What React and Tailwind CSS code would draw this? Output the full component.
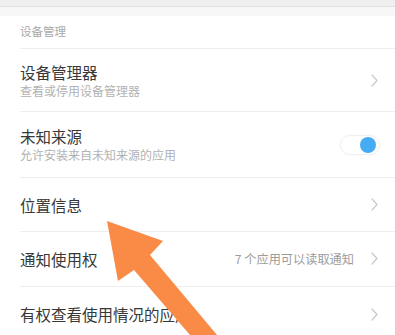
function Chevron() {
  return (
    <svg width="7" height="13" viewBox="0 0 7 13" fill="none">
      <path d="M1 1l5 5.5L1 12" stroke="#c9c9c9" strokeWidth="1.2" strokeLinecap="round" strokeLinejoin="round" />
    </svg>
  );
}

function Row({ title, sub, right, h }) {
  return (
    <div className={`ml-5 flex items-center justify-between border-b border-[#eeeeee] pr-[17px] ${h}`}>
      <div className="flex flex-col">
        <span className="text-[15.5px] leading-[20px] text-[#383838]">{title}</span>
        {sub && <span className="text-[12px] leading-[16px] text-[#b2b2b2] mt-[1px]">{sub}</span>}
      </div>
      {right}
    </div>
  );
}

export default function App() {
  return (
    <div className="relative w-[395px] h-[335px] overflow-hidden bg-white font-['Noto_Sans_CJK_SC','Noto_Sans',sans-serif]">
      <div className="h-[7px] bg-[#efefef] border-b border-[#e2e2e2]" />
      <div className="h-[9px] bg-[#f7f7f7]" />

      <div className="ml-5 h-[33px] flex items-center border-b border-[#eeeeee]">
        <span className="text-[11.5px] text-[#a9a9a9]">设备管理</span>
      </div>

      <Row h="h-[63px]" title="设备管理器" sub="查看或停用设备管理器" right={<Chevron />} />
      <Row
        h="h-[66px]"
        title="未知来源"
        sub="允许安装来自未知来源的应用"
        right={
          <div className="w-[40px] h-[20px] rounded-full border border-[#f0f0f0] bg-white flex items-center justify-end pr-[3px] mr-[-2px] shadow-[0_0_2px_rgba(0,0,0,0.04)]">
            <div className="w-[16px] h-[16px] rounded-full bg-[#45abf3]" />
          </div>
        }
      />
      <Row h="h-[54px]" title="位置信息" right={<Chevron />} />
      <Row
        h="h-[55px]"
        title="通知使用权"
        right={
          <div className="flex items-center gap-[17px]">
            <span className="text-[12.2px] text-[#9c9c9c]">7 个应用可以读取通知</span>
            <Chevron />
          </div>
        }
      />
      <Row h="h-[55px]" title="有权查看使用情况的应用" right={<Chevron />} />

      <svg className="absolute left-0 top-0 pointer-events-none" width="395" height="335" viewBox="0 0 395 335">
        <polygon
          points="107,221 163,241 150,255 217,335 190,335 134,270 118,281"
          fill="#f98b47"
        />
      </svg>
    </div>
  );
}
